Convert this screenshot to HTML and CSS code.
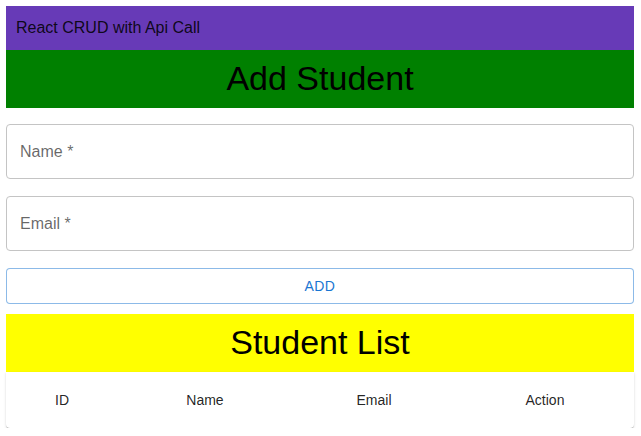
FILE: index.html
```html
<!DOCTYPE html>
<html>
<head>
<meta charset="utf-8">
<link rel="stylesheet" href="styles.css">
</head>
<body>
<div class="page">
  <header class="appbar">React CRUD with Api Call</header>
  <h2 class="banner green">Add Student</h2>
  <form class="form">
    <div class="field"><span class="label">Name *</span></div>
    <div class="field"><span class="label">Email *</span></div>
    <button type="button" class="add">ADD</button>
  </form>
  <h2 class="banner yellow">Student List</h2>
  <div class="table">
    <div class="cell">ID</div>
    <div class="cell">Name</div>
    <div class="cell">Email</div>
    <div class="cell">Action</div>
  </div>
</div>
</body>
</html>
```
FILE: styles.css
```css
html, body { margin: 0; padding: 0; background: #fff; }
body { font-family: "Liberation Sans", Arial, sans-serif; }
.page { padding: 6px 7px 0 6px; }
.appbar {
  height: 44px; background: #673ab7; color: rgba(0,0,0,0.87);
  font-size: 16px; display: flex; align-items: center; padding-left: 10px;
}
.banner {
  margin: 0; height: 58px; display: flex; align-items: center; justify-content: center;
  font-size: 34px; font-weight: 400; color: #000; padding-bottom: 2px; box-sizing: border-box;
}
.green { background: #008000; }
.yellow { background: #ffff00; }
.form { display: flex; flex-direction: column; gap: 17px; padding: 16px 0 10px; }
.field {
  height: 53px; border: 1px solid #c4c4c4; border-radius: 4px;
  display: flex; align-items: center; padding-left: 13px;
}
.label { font-size: 16px; color: rgba(0,0,0,0.6); }
.add {
  height: 36px; border: 1px solid rgba(25,118,210,0.5); border-radius: 4px; background: #fff;
  color: #1976d2; font-family: inherit; font-size: 14px; letter-spacing: 0.4px; font-weight: 400;
}
.table {
  display: grid; grid-template-columns: 112px 174px 164px 178px; height: 56px;
  border-radius: 0 0 4px 4px; background: #fff;
  box-shadow: 0 2px 1px -1px rgba(0,0,0,0.2), 0 1px 1px 0 rgba(0,0,0,0.14), 0 1px 3px 0 rgba(0,0,0,0.12);
}
.cell { display: flex; align-items: center; justify-content: center; font-size: 14px; color: rgba(0,0,0,0.87); }
```
